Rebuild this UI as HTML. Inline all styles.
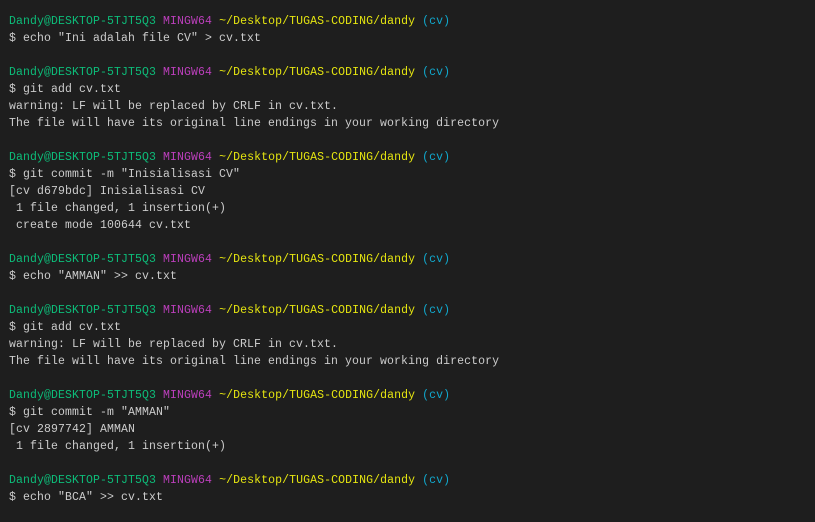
<!DOCTYPE html>
<html><head><meta charset="utf-8"><style>
html,body{margin:0;padding:0;background:#1e1e1e;width:815px;height:522px;overflow:hidden}
pre{margin:0;padding:13px 0 0 9px;font-family:"Liberation Mono",monospace;font-size:11.5px;letter-spacing:0.1px;line-height:17px;color:#cccccc;white-space:pre}
.g{color:#0dbc79}.m{color:#bc3fbc}.y{color:#e5e510}.c{color:#11a8cd}
</style></head><body><pre><span class="g">Dandy@DESKTOP-5TJT5Q3</span> <span class="m">MINGW64</span> <span class="y">~/Desktop/TUGAS-CODING/dandy</span> <span class="c">(cv)</span>
$ echo "Ini adalah file CV" &gt; cv.txt

<span class="g">Dandy@DESKTOP-5TJT5Q3</span> <span class="m">MINGW64</span> <span class="y">~/Desktop/TUGAS-CODING/dandy</span> <span class="c">(cv)</span>
$ git add cv.txt
warning: LF will be replaced by CRLF in cv.txt.
The file will have its original line endings in your working directory

<span class="g">Dandy@DESKTOP-5TJT5Q3</span> <span class="m">MINGW64</span> <span class="y">~/Desktop/TUGAS-CODING/dandy</span> <span class="c">(cv)</span>
$ git commit -m "Inisialisasi CV"
[cv d679bdc] Inisialisasi CV
 1 file changed, 1 insertion(+)
 create mode 100644 cv.txt

<span class="g">Dandy@DESKTOP-5TJT5Q3</span> <span class="m">MINGW64</span> <span class="y">~/Desktop/TUGAS-CODING/dandy</span> <span class="c">(cv)</span>
$ echo "AMMAN" &gt;&gt; cv.txt

<span class="g">Dandy@DESKTOP-5TJT5Q3</span> <span class="m">MINGW64</span> <span class="y">~/Desktop/TUGAS-CODING/dandy</span> <span class="c">(cv)</span>
$ git add cv.txt
warning: LF will be replaced by CRLF in cv.txt.
The file will have its original line endings in your working directory

<span class="g">Dandy@DESKTOP-5TJT5Q3</span> <span class="m">MINGW64</span> <span class="y">~/Desktop/TUGAS-CODING/dandy</span> <span class="c">(cv)</span>
$ git commit -m "AMMAN"
[cv 2897742] AMMAN
 1 file changed, 1 insertion(+)

<span class="g">Dandy@DESKTOP-5TJT5Q3</span> <span class="m">MINGW64</span> <span class="y">~/Desktop/TUGAS-CODING/dandy</span> <span class="c">(cv)</span>
$ echo "BCA" &gt;&gt; cv.txt</pre></body></html>
